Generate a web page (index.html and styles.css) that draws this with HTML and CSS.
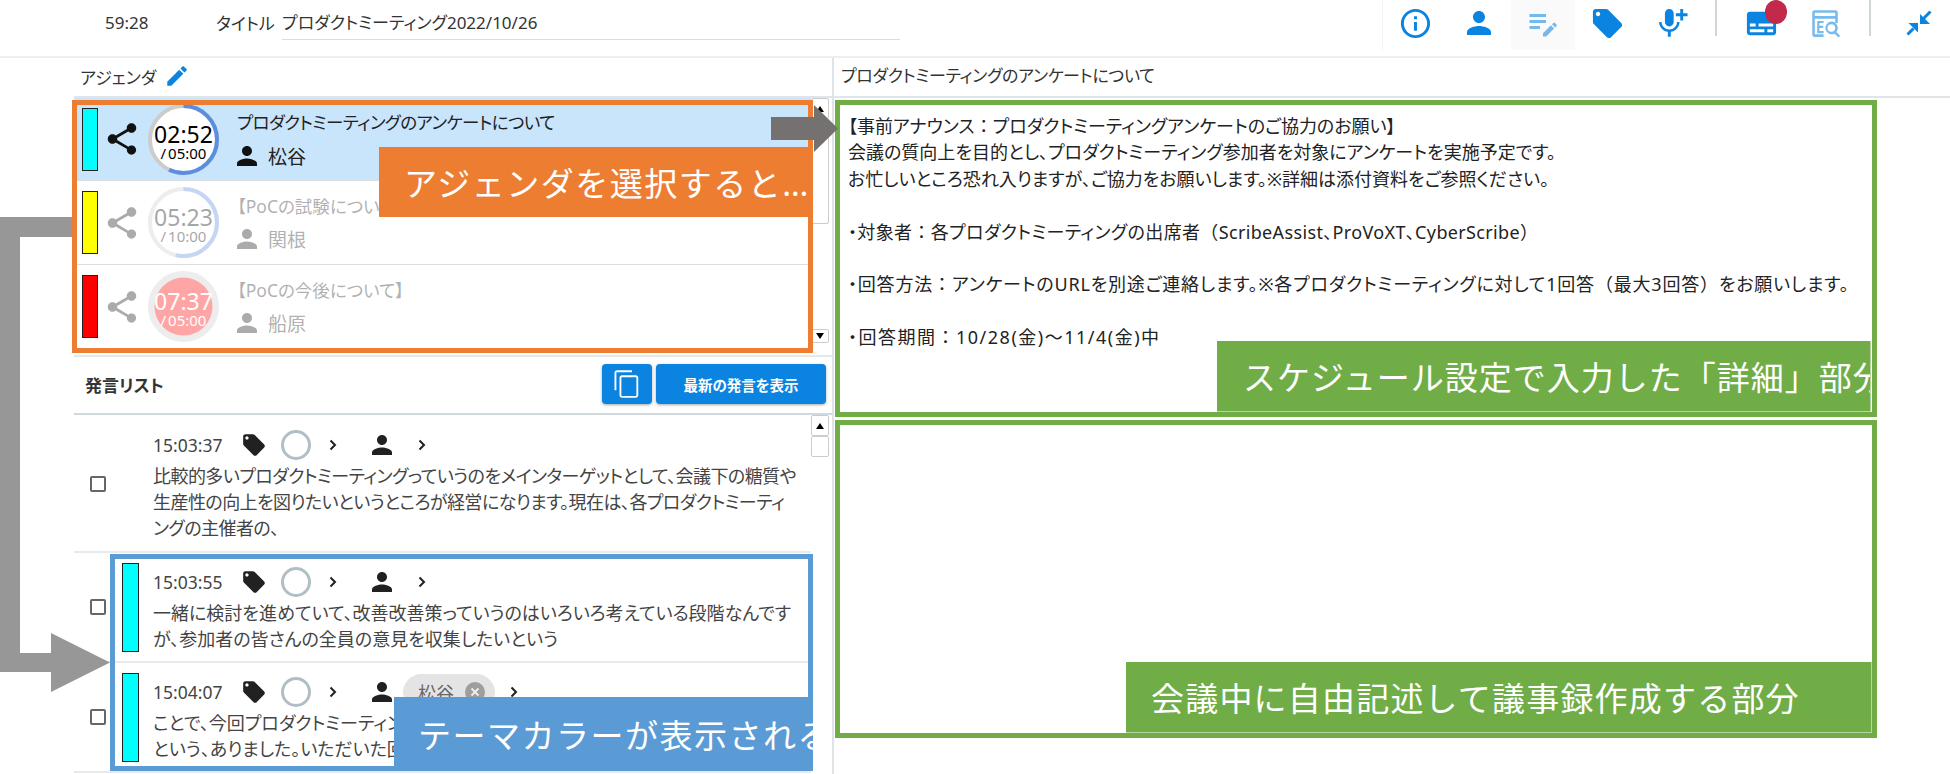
FILE: index.html
```html
<!DOCTYPE html>
<html lang="ja">
<head>
<meta charset="utf-8">
<title>プロダクトミーティング</title>
<link rel="stylesheet" href="styles.css">
</head>
<body>
<svg class="sprite" width="0" height="0" aria-hidden="true">
  <symbol id="i-person" viewBox="0 0 24 24"><path d="M12 12c2.21 0 4-1.79 4-4s-1.79-4-4-4-4 1.79-4 4 1.79 4 4 4zm0 2c-2.67 0-8 1.34-8 4v2h16v-2c0-2.66-5.33-4-8-4z"/></symbol>
  <symbol id="i-tag" viewBox="0 0 24 24"><path d="M21.41 11.58l-9-9C12.05 2.22 11.55 2 11 2H4c-1.1 0-2 .9-2 2v7c0 .55.22 1.05.59 1.42l9 9c.36.36.86.58 1.41.58.55 0 1.05-.22 1.41-.59l7-7c.37-.36.59-.86.59-1.41 0-.55-.23-1.06-.59-1.42zM5.5 7C4.67 7 4 6.33 4 5.5S4.67 4 5.5 4 7 4.67 7 5.5 6.33 7 5.5 7z"/></symbol>
  <symbol id="i-share" viewBox="0 0 24 24"><path d="M18 16.08c-.76 0-1.44.3-1.96.77L8.91 12.7c.05-.23.09-.46.09-.7s-.04-.47-.09-.7l7.05-4.11c.54.5 1.25.81 2.04.81 1.66 0 3-1.34 3-3s-1.34-3-3-3-3 1.34-3 3c0 .24.04.47.09.7L8.04 9.81C7.5 9.31 6.79 9 6 9c-1.66 0-3 1.34-3 3s1.34 3 3 3c.79 0 1.5-.31 2.04-.81l7.12 4.16c-.05.21-.08.43-.08.65 0 1.61 1.31 2.92 2.92 2.92 1.61 0 2.92-1.31 2.92-2.92s-1.31-2.92-2.92-2.92z"/></symbol>
  <symbol id="i-chev" viewBox="0 0 16 16"><path d="M5.5 3.5 10 8l-4.5 4.5" fill="none" stroke="currentColor" stroke-width="2"/></symbol>
</svg>

<header class="topbar">
  <span class="clock">59:28</span>
  <span class="title-label">タイトル</span>
  <span class="title-field">プロダクトミーティング2022/10/26</span>
  <div class="toolbar">
    <button class="tool"><svg viewBox="0 0 24 24" class="ic35"><path d="M11 7h2v2h-2zm0 4h2v6h-2zm1-9C6.48 2 2 6.48 2 12s4.48 10 10 10 10-4.48 10-10S17.52 2 12 2zm0 18c-4.41 0-8-3.59-8-8s3.59-8 8-8 8 3.59 8 8-3.59 8-8 8z"/></svg></button>
    <button class="tool"><svg class="ic36"><use href="#i-person"/></svg></button>
    <button class="tool tool-active"><svg viewBox="0 0 24 24" class="ic36 faded"><path d="M3 10h11v2H3zm0-2h11V6H3zm0 8h7v-2H3zm15.01-3.13.71-.71c.39-.39 1.02-.39 1.41 0l.71.71c.39.39.39 1.02 0 1.41l-.71.71zm-.71.71-5.3 5.3V21h2.12l5.3-5.3z"/></svg></button>
    <button class="tool"><svg class="ic35"><use href="#i-tag"/></svg></button>
    <button class="tool"><svg viewBox="0 0 24 24" class="ic35"><path d="M10.5 14c1.66 0 3-1.34 3-3V5c0-1.66-1.34-3-3-3s-3 1.34-3 3v6c0 1.66 1.34 3 3 3zm5.3-3c0 3-2.54 5.1-5.3 5.1S5.2 14 5.2 11H3.5c0 3.41 2.72 6.23 6 6.72V21h2v-3.28c3.28-.48 6-3.3 6-6.72h-1.7z"/><path d="M18 2h2v3h3v2h-3v3h-2V7h-3V5h3z"/></svg></button>
    <span class="tool-sep"></span>
    <button class="tool tool-badge"><svg viewBox="0 0 24 24" class="ic35"><path d="M20 4H4c-1.1 0-2 .9-2 2v12c0 1.1.9 2 2 2h16c1.1 0 2-.9 2-2V6c0-1.1-.9-2-2-2zM4 12h4v2H4v-2zm10 6H4v-2h10v2zm6 0h-4v-2h4v2zm0-4H10v-2h10v2z"/></svg><span class="badge"></span></button>
    <button class="tool"><svg viewBox="0 0 24 24" class="ic34 faded"><path d="M3 4.5C3 3.7 3.7 3 4.5 3h15c.8 0 1.5.7 1.5 1.5V12h-1.8V9H4.8v11H11v1.8H4.500C3.700 21.800 3 21.100 3 20.300zM4.800 4.800V7h14.400V4.800z"/><path d="M6.500 10.500H11v1.500H8v2h2.700v1.500H8v2.200h3V19.200H6.500z"/><path d="M16.500 11a4.500 4.500 0 0 1 3.500 7.300l2.700 2.700-1.200 1.200-2.700-2.700A4.500 4.500 0 1 1 16.500 11zm0 1.800a2.700 2.700 0 1 0 0 5.400 2.700 2.700 0 0 0 0-5.400z"/></svg></button>
    <span class="tool-sep tool-sep-last"></span>
    <button class="tool tool-last"><svg viewBox="0 0 26 26" class="shrink"><path d="M14 4v10h10z"/><path d="M24.500 1.500 17.500 8.500" class="shrink-line"/><path d="M12 13H2.500L12 22.500z"/><path d="M1.500 24.500 7.500 18.500" class="shrink-line"/></svg></button>
  </div>
</header>

<main class="layout">
  <section class="left">
    <div class="agenda-head">
      <span>アジェンダ</span>
      <svg viewBox="0 0 24 24" class="pencil"><path d="M3 17.250V21h3.750L17.810 9.940l-3.750-3.750L3 17.250zM20.710 7.040c.39-.39.39-1.020 0-1.410l-2.340-2.340c-.39-.39-1.020-.39-1.410 0l-1.830 1.830 3.750 3.750 1.830-1.830z"/></svg>
    </div>
    <div class="agenda-list">
      <div class="agenda-rows">
        <div class="agenda-row selected first">
          <span class="bar bar-cyan"></span>
          <svg class="share"><use href="#i-share"/></svg>
          <div class="ring">
            <svg viewBox="0 0 71 71"><circle cx="35.500" cy="35.500" r="33.500" class="ring-track"/><circle cx="35.500" cy="35.500" r="33.500" class="ring-progress" stroke-dasharray="120 211" transform="rotate(-90 35.500 35.500)"/></svg>
            <div class="ring-text"><span class="ring-time">02:52</span><span class="ring-total">/ 05:00</span></div>
          </div>
          <div class="agenda-info">
            <div class="agenda-title agenda-title-tight">プロダクトミーティングのアンケートについて</div>
            <div class="agenda-owner"><svg class="person"><use href="#i-person"/></svg>松谷</div>
          </div>
        </div>
        <div class="agenda-row dim">
          <span class="bar bar-yellow"></span>
          <svg class="share"><use href="#i-share"/></svg>
          <div class="ring">
            <svg viewBox="0 0 71 71"><circle cx="35.500" cy="35.500" r="33.500" class="ring-track"/><circle cx="35.500" cy="35.500" r="33.500" class="ring-progress" stroke-dasharray="113 211" transform="rotate(-90 35.500 35.500)"/></svg>
            <div class="ring-text"><span class="ring-time">05:23</span><span class="ring-total">/ 10:00</span></div>
          </div>
          <div class="agenda-info">
            <div class="agenda-title">【PoCの試験について】</div>
            <div class="agenda-owner"><svg class="person"><use href="#i-person"/></svg>関根</div>
          </div>
        </div>
        <div class="agenda-row dim">
          <span class="bar bar-red"></span>
          <svg class="share"><use href="#i-share"/></svg>
          <div class="ring">
            <svg viewBox="0 0 71 71"><circle cx="35.500" cy="35.500" r="32" class="ring-track ring-track-over"/><circle cx="35.500" cy="35.500" r="29" class="ring-over"/></svg>
            <div class="ring-text ring-text-over"><span class="ring-time">07:37</span><span class="ring-total">/ 05:00</span></div>
          </div>
          <div class="agenda-info">
            <div class="agenda-title">【PoCの今後について】</div>
            <div class="agenda-owner"><svg class="person"><use href="#i-person"/></svg>船原</div>
          </div>
        </div>
      </div>
      <div class="scrollbar scrollbar-agenda">
        <span class="sb-btn"><i class="tri-up"></i></span>
        <span class="sb-thumb"></span>
        <span class="sb-space"></span>
        <span class="sb-btn sb-btn-small"><i class="tri-down"></i></span>
      </div>
    </div>

    <div class="speech-head">
      <span class="speech-title">発言リスト</span>
      <button class="btn btn-copy"><svg viewBox="0 0 24 24"><path d="M16 1H4c-1.100 0-2 .9-2 2v14h1.500V2.500H16V1zm3 4H8c-1.100 0-2 .9-2 2v14c0 1.100.9 2 2 2h11c1.100 0 2-.9 2-2V7c0-1.100-.9-2-2-2zm.5 16.500h-12v-15h12v15z"/></svg></button>
      <button class="btn btn-latest">最新の発言を表示</button>
    </div>
    <div class="speech-list">
      <div class="speech-rows">
        <article class="speech-row speech-row-first">
          <span class="check"></span>
          <span class="bar-slot"></span>
          <div class="speech-body">
            <div class="meta">
              <span class="time">15:03:37</span>
              <svg class="tag"><use href="#i-tag"/></svg>
              <span class="dot"></span>
              <svg class="chev chev-a"><use href="#i-chev"/></svg>
              <svg class="meta-person"><use href="#i-person"/></svg>
              <svg class="chev chev-b"><use href="#i-chev"/></svg>
            </div>
            <p class="speech-text speech-text-tight">比較的多いプロダクトミーティングっていうのをメインターゲットとして、会議下の糖質や<br>生産性の向上を図りたいというところが経営になります。現在は、各プロダクトミーティ<br>ングの主催者の、</p>
          </div>
        </article>
        <article class="speech-row">
          <span class="check"></span>
          <span class="bar-slot"><span class="speech-bar"></span></span>
          <div class="speech-body">
            <div class="meta">
              <span class="time">15:03:55</span>
              <svg class="tag"><use href="#i-tag"/></svg>
              <span class="dot"></span>
              <svg class="chev chev-a"><use href="#i-chev"/></svg>
              <svg class="meta-person"><use href="#i-person"/></svg>
              <svg class="chev chev-b"><use href="#i-chev"/></svg>
            </div>
            <p class="speech-text">一緒に検討を進めていて、改善改善策っていうのはいろいろ考えている段階なんです<br>が、参加者の皆さんの全員の意見を収集したいという</p>
          </div>
        </article>
        <article class="speech-row">
          <span class="check"></span>
          <span class="bar-slot"><span class="speech-bar"></span></span>
          <div class="speech-body">
            <div class="meta">
              <span class="time">15:04:07</span>
              <svg class="tag"><use href="#i-tag"/></svg>
              <span class="dot"></span>
              <svg class="chev chev-a"><use href="#i-chev"/></svg>
              <svg class="meta-person"><use href="#i-person"/></svg>
              <span class="chip">松谷<svg viewBox="0 0 20 20"><circle cx="10" cy="10" r="10" fill="#9e9e9e"/><path d="M6.500 6.500l7 7m0-7l-7 7" stroke="#eee" stroke-width="1.800"/></svg></span>
              <svg class="chev chev-c"><use href="#i-chev"/></svg>
            </div>
            <p class="speech-text">ことで、今回プロダクトミーティング<br>という、ありました。いただいた回</p>
          </div>
        </article>
      </div>
      <div class="scrollbar scrollbar-speech">
        <span class="sb-btn"><i class="tri-up"></i></span>
        <span class="sb-thumb sb-thumb-small"></span>
      </div>
    </div>
  </section>

  <section class="right">
    <div class="detail-head">プロダクトミーティングのアンケートについて</div>
    <div class="green-box box-detail">
      <p class="detail-text">【事前アナウンス<span class="fw">：</span>プロダクトミーティングアンケートのご協力のお願い】<br>会議の質向上を目的とし、プロダクトミーティング参加者を対象にアンケートを実施予定です。<br>お忙しいところ恐れ入りますが、ご協力をお願いします。※詳細は添付資料をご参照ください。<br><br><span class="wide-a">・対象者<span class="fw">：</span>各プロダクトミーティングの出席者<span class="fw">（</span>ScribeAssist、ProVoXT、CyberScribe<span class="fw">）</span></span><br><br><span class="wide-b">・回答方法<span class="fw">：</span>アンケートのURLを別途ご連絡します。※各プロダクトミーティングに対して1回答<span class="fw">（</span>最大3回答<span class="fw">）</span>をお願いします。</span><br><br><span class="wide-c">・回答期間<span class="fw">：10/28(金)～11/4(金)</span>中</span></p>
      <div class="note note-green note-detail">スケジュール設定で入力した「詳細」部分</div>
    </div>
    <div class="green-box box-free">
      <div class="note note-green note-free">会議中に自由記述して議事録作成する部分</div>
    </div>
  </section>
</main>

<div class="frame frame-orange"></div>
<div class="frame frame-blue"></div>
<div class="note note-orange">アジェンダを選択すると…</div>
<div class="note note-blue">テーマカラーが表示される</div>
<svg class="arrow-right" viewBox="0 0 67 47"><path d="M0 12h43V0l24 23.500L43 47V35H0z"/></svg>
<svg class="arrow-flow" viewBox="0 0 110 475"><path d="M72 0v20H20v416h31v-20l59 29.500-59 29.500v-20H0V0z"/></svg>
</body>
</html>
```
FILE: styles.css
```css
* { box-sizing: border-box; }
html, body { margin: 0; padding: 0; }
body {
  position: relative;
  width: 1950px;
  height: 774px;
  overflow: hidden;
  background: #fff;
  color: #333;
  font-family: "Noto Sans", "Noto Sans CJK JP", sans-serif;
  font-feature-settings: "palt";
  font-size: 17px;
}
.sprite { position: absolute; }
p { margin: 0; }
button { border: 0; padding: 0; background: none; font: inherit; }

/* top bar */
.topbar {
  display: flex;
  align-items: center;
  height: 58px;
  border-bottom: 2px solid #eee;
  padding-left: 105px;
  padding-bottom: 12px;
}
.clock { width: 111px; font-size: 17px; }
.title-label { width: 66px; font-size: 17px; }
.title-field {
  width: 618px;
  height: 30px;
  line-height: 26px;
  font-size: 17px;
  border-bottom: 1px solid #d9dde0;
  margin-top: 6px;
}
.toolbar {
  display: flex;
  align-self: flex-start;
  margin-left: auto;
  border-left: 1px solid #f5f5f5;
  height: 50px;
}
.tool {
  display: flex;
  align-items: center;
  justify-content: center;
  position: relative;
  width: 64px;
  height: 50px;
  padding-bottom: 4px;
}
.tool svg { fill: #0a84e0; }
.tool-active { background: #fafafa; }
.ic34 { width: 34px; height: 34px; }
.ic35 { width: 35px; height: 35px; }
.ic36 { width: 36px; height: 36px; }
.shrink { width: 26px; height: 26px; }
.shrink-line { fill: none; stroke: #0a84e0; stroke-width: 3; }
.faded { opacity: .55; }
.tool-sep { width: 2px; height: 36px; margin: 0 12px; background: #cfd6da; }
.tool-sep-last { margin-right: 17px; }
.tool-last { width: 62px; }
.badge {
  position: absolute;
  left: 36px;
  top: 0;
  width: 22px;
  height: 24px;
  border-radius: 50%;
  background: #c2294a;
}

/* layout */
.layout { display: flex; height: 716px; }
.left {
  width: 760px;
  margin-left: 74px;
  border-right: 2px solid #dde3e6;
}
.right { flex: 1; }

/* agenda */
.agenda-head {
  display: flex;
  align-items: center;
  gap: 8px;
  height: 40px;
  padding-left: 6px;
  border-bottom: 2px solid #dfe5e8;
  font-size: 17px;
  padding-bottom: 2px;
}
.pencil { width: 26px; height: 26px; fill: #0a84e0; }
.agenda-list {
  display: flex;
  height: 259px;
  border-bottom: 2px solid #e6e9ea;
}
.agenda-rows { width: 737px; }
.agenda-row {
  display: flex;
  align-items: center;
  height: 84px;
  padding-left: 8px;
  border-bottom: 1px solid #ddd;
}
.agenda-row.first { height: 83px; }
.selected { background: #c9e5fb; }
.bar { width: 16px; height: 63px; border: 1px solid #222; }
.bar-cyan { background: #00ffff; }
.bar-yellow { background: #ffff00; }
.bar-red { background: #ff0000; }
.share { width: 38px; height: 38px; margin-left: 5px; fill: #111; }
.ring {
  display: grid;
  place-items: center;
  width: 71px;
  height: 71px;
  margin-left: 7px;
}
.ring > * { grid-area: 1 / 1; }
.ring svg { width: 71px; height: 71px; }
.ring-track { fill: #fff; stroke: #ccc; stroke-width: 4; }
.ring-track-over { stroke-width: 7; }
.ring-progress { fill: none; stroke: #5b8de0; stroke-width: 4; }
.ring-over { fill: #ff0000; }
.ring-text { display: flex; flex-direction: column; align-items: center; padding-top: 3px; color: #000; white-space: nowrap; }
.ring-time { font-size: 23px; line-height: 24px; font-feature-settings: normal; }
.ring-total { font-size: 15px; line-height: 14px; word-spacing: -2px; font-feature-settings: normal; }
.ring-text-over { color: #fff; }
.agenda-info { margin-left: 13px; }
.agenda-title { height: 33px; line-height: 33px; margin-left: 5px; font-size: 17.500px; color: #222; white-space: nowrap; }
.agenda-title-tight { letter-spacing: -.6px; }
.agenda-owner { display: flex; align-items: center; gap: 6px; height: 33px; font-size: 19px; color: #222; }
.person { width: 30px; height: 30px; fill: #111; }
.dim .share, .dim .ring, .dim .agenda-info { opacity: .35; }

/* fake scrollbars */
.scrollbar { display: flex; flex-direction: column; width: 18px; }
.scrollbar-agenda { height: 245px; }
.sb-btn {
  display: flex;
  align-items: center;
  justify-content: center;
  height: 21px;
  border: 1px solid #ccc;
  border-radius: 2px;
  background: #fff;
}
.sb-btn-small { height: 14px; }
.sb-thumb { height: 105px; border: 1px solid #ccc; border-radius: 2px; background: #fff; }
.sb-thumb-small { height: 21px; }
.sb-space { flex: 1; }
.tri-up { border: 4px solid transparent; border-top: 0; border-bottom: 6px solid #000; }
.tri-down { border: 4px solid transparent; border-bottom: 0; border-top: 6px solid #000; }

/* speech list */
.speech-head {
  display: flex;
  align-items: center;
  height: 58px;
  padding-left: 11px;
  border-bottom: 2px solid #cfd8dc;
  padding-bottom: 2px;
}
.speech-title { font-size: 17px; font-weight: 700; color: #333; margin-right: auto; }
.btn {
  display: flex;
  align-items: center;
  justify-content: center;
  height: 40px;
  border-radius: 4px;
  background: #0a84e0;
  box-shadow: 0 1px 3px rgba(0, 0, 0, .35);
  color: #fff;
  font-size: 14.500px;
  font-weight: 700;
}
.btn-copy { width: 50px; margin-right: 4px; }
.btn-copy svg { width: 30px; height: 30px; fill: #fff; }
.btn-latest { width: 170px; margin-right: 6px; }
.speech-list { display: flex; height: 359px; }
.speech-rows { width: 737px; }
.speech-row {
  display: flex;
  align-items: center;
  border-bottom: 2px solid #e8eaeb;
  padding: 11px 0 9px 16px;
}
.speech-row-first { padding: 12px 0 10px 16px; }
.check { flex: none; width: 16px; height: 16px; margin-top: -2px; border: 2px solid #666; border-radius: 2px; }
.speech-row-first .check { margin-top: 0; }
.bar-slot { flex: none; width: 47px; padding-left: 16px; margin-top: -2px; }
.speech-bar { display: block; width: 17px; height: 89px; background: #00ffff; border: 1px solid #222; }
.meta { display: flex; align-items: center; height: 36px; }
.time { width: 88px; font-size: 17.500px; color: #444; font-feature-settings: normal; }
.tag { width: 26px; height: 26px; fill: #212121; }
.dot { width: 30px; height: 30px; margin-left: 14px; border: 3px solid #b0bec5; border-radius: 50%; }
.chev { width: 16px; height: 16px; color: #212121; }
.chev-a { margin-left: 14px; }
.meta-person { width: 30px; height: 30px; margin-left: 26px; fill: #212121; }
.chev-b { margin-left: 17px; }
.chev-c { margin-left: 11px; }
.chip {
  display: flex;
  align-items: center;
  width: 92px;
  height: 37px;
  margin-left: 6px;
  padding-left: 15px;
  gap: 11px;
  border-radius: 19px;
  background: #e4e4e4;
  font-size: 18px;
  color: #666;
}
.chip svg { width: 20px; height: 20px; }
.speech-text { font-size: 18px; line-height: 26px; color: #444; white-space: nowrap; }
.speech-text-tight { letter-spacing: -.55px; }

/* detail */
.detail-head {
  height: 40px;
  line-height: 36px;
  padding-left: 7px;
  font-size: 17px;
  letter-spacing: -.35px;
  border-bottom: 2px solid #dfe5e8;
}
.green-box {
  position: relative;
  width: 1042px;
  border: 5px solid #70ad47;
  margin-left: 1px;
  background: #fff;
}
.box-detail { height: 317px; margin-top: 2px; padding: 8px 0 0 8px; }
.box-free { height: 318px; margin-top: 3px; }
.detail-text { font-size: 18px; line-height: 26.400px; color: #222; white-space: nowrap; }
.fw { font-feature-settings: normal; }
.wide-a { letter-spacing: .35px; }
.wide-b { letter-spacing: .8px; }
.wide-c { letter-spacing: 1.500px; }

/* annotation overlays */
.note {
  display: flex;
  align-items: center;
  overflow: hidden;
  white-space: nowrap;
  color: #fff;
  font-size: 33px;
  letter-spacing: 1.500px;
  font-feature-settings: normal;
}
.note-green { position: absolute; background: #70ad47; border-right: 1px solid #b7d6a2; border-bottom: 1px solid #b7d6a2; }
.note-detail { left: 377px; top: 236px; width: 654px; height: 71px; padding-left: 26px; letter-spacing: 1px; }
.note-free { left: 286px; top: 237px; width: 746px; height: 71px; padding-left: 25px; letter-spacing: 1.200px; }
.note-orange {
  position: absolute;
  left: 379px;
  top: 147px;
  width: 434px;
  height: 70px;
  padding-left: 25px;
  background: #ed7d31;
}
.note-blue {
  position: absolute;
  left: 394px;
  top: 697px;
  width: 419px;
  height: 74px;
  padding-left: 24px;
  background: #5b9bd5;
}
.frame { position: absolute; pointer-events: none; }
.frame-orange { left: 72px; top: 100px; width: 741px; height: 253px; border: 5px solid #ed7d31; }
.frame-blue { left: 110px; top: 554px; width: 703px; height: 217px; border: 5px solid #5b9bd5; }
.arrow-right { position: absolute; left: 771px; top: 105px; width: 67px; height: 47px; fill: #767171; }
.arrow-flow { position: absolute; left: 0; top: 217px; width: 110px; height: 475px; fill: #979797; }
```
